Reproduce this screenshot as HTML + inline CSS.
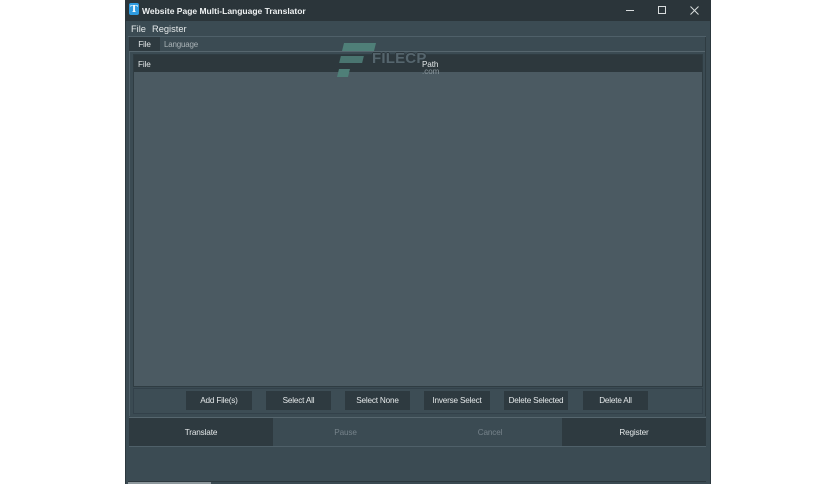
<!DOCTYPE html>
<html>
<head>
<meta charset="utf-8">
<style>
html,body{margin:0;padding:0;background:#fff}
body{width:836px;height:484px;position:relative;overflow:hidden;font-family:"Liberation Sans",sans-serif}
div{position:absolute;box-sizing:border-box}
.t{white-space:nowrap;color:#e4e8e9;font-size:8.2px;letter-spacing:-.15px;line-height:12px;text-align:center}
.b{top:391px;height:19px;background:#2e3a40;color:#e4e8e9;font-size:8.2px;letter-spacing:-.2px;line-height:19px;text-align:center;white-space:nowrap}
.a{top:418px;height:28px;font-size:8.2px;letter-spacing:-.15px;line-height:29px;text-align:center;color:#e4e8e9}
</style>
</head>
<body>
<div style="left:125px;top:0;width:586px;height:484px;background:#3b4b53"></div>
<div style="left:125px;top:0;width:586px;height:21px;background:#2b353a"></div>
<div style="left:125px;top:21px;width:1px;height:463px;background:#2c383e"></div>
<div style="left:710px;top:21px;width:1px;height:463px;background:#2c383e"></div>
<div style="left:129px;top:3px;width:10px;height:12px;background:#2f9be0;border-radius:2px"></div>
<div style="left:129px;top:3px;width:10px;height:12px;color:#fff;font:bold 11px/12px 'Liberation Serif',serif;text-align:center">T</div>
<div class="t" style="left:142px;top:5px;font-size:8.5px;letter-spacing:0;font-weight:bold;color:#eef1f2">Website Page Multi-Language Translator</div>
<div style="left:626px;top:10px;width:8px;height:1px;background:#d8dcdd"></div>
<div style="left:658px;top:6px;width:8px;height:8px;border:1px solid #d8dcdd"></div>
<svg style="position:absolute;left:690px;top:6px" width="9" height="9" viewBox="0 0 9 9"><path d="M0.5 0.5L8.5 8.5M8.5 0.5L0.5 8.5" stroke="#d8dcdd" stroke-width="1" fill="none"/></svg>
<div class="t" style="left:131px;top:23px;font-size:9.3px;letter-spacing:0">File</div>
<div class="t" style="left:152px;top:23px;font-size:9.3px;letter-spacing:0">Register</div>
<div style="left:128px;top:36px;width:578px;height:1px;background:#4f6069"></div>
<div style="left:129px;top:37px;width:31px;height:14px;background:#2e3a40"></div>
<div class="t" style="left:129px;top:39px;width:31px">File</div>
<div class="t" style="left:164px;top:39px;font-size:8px;letter-spacing:-.2px;color:#a9b2b6">Language</div>
<div style="left:129px;top:51px;width:577px;height:1px;background:#56666e"></div>
<div style="left:129px;top:52px;width:1px;height:364px;background:#4f6069"></div>
<div style="left:705px;top:37px;width:1px;height:379px;background:#2f3c42"></div>
<div style="left:133px;top:54px;width:570px;height:333px;background:#4b5a62;border:1px solid #2f3c42"></div>
<div style="left:134px;top:55px;width:568px;height:17px;background:#2d383d"></div>
<div class="t" style="left:138px;top:59px">File</div>
<div style="left:343px;top:43px;width:32px;height:8px;background:#4f7f78;transform:skewX(-14deg)"></div>
<div style="left:340px;top:56px;width:23px;height:7px;background:#4a7570;transform:skewX(-14deg)"></div>
<div style="left:338px;top:69px;width:11px;height:8px;background:#4f7f78;transform:skewX(-14deg)"></div>
<div class="t" style="left:372px;top:50px;font-size:15px;letter-spacing:.2px;line-height:18px;font-weight:bold;color:#55656d;text-shadow:-1px 0 0 #2c373d,1px 0 0 #2c373d,0 -1px 0 #2c373d,0 1px 0 #2c373d">FILECP</div>
<div class="t" style="left:422px;top:59px">Path</div>
<div class="t" style="left:422px;top:66px;font-size:8px;letter-spacing:0;color:#8b989e">.com</div>
<div style="left:133px;top:388px;width:570px;height:26px;border:1px solid #33414a;background:#3d4d55"></div>
<div class="b" style="left:186px;width:66px">Add File(s)</div>
<div class="b" style="left:266px;width:65px">Select All</div>
<div class="b" style="left:345px;width:65px">Select None</div>
<div class="b" style="left:424px;width:66px">Inverse Select</div>
<div class="b" style="left:504px;width:64px">Delete Selected</div>
<div class="b" style="left:583px;width:65px">Delete All</div>
<div style="left:129px;top:417px;width:577px;height:1px;background:#56666e"></div>
<div class="a" style="left:129px;width:144px;background:#2e3a40">Translate</div>
<div class="a" style="left:273px;width:145px;background:#3b4b53;color:#75828a">Pause</div>
<div class="a" style="left:418px;width:144px;background:#3b4b53;color:#75828a">Cancel</div>
<div class="a" style="left:562px;width:144px;background:#2e3a40">Register</div>
<div style="left:129px;top:446px;width:577px;height:1px;background:#4f6069"></div>
<div style="left:128px;top:481px;width:578px;height:1px;background:#2c383e"></div>
<div style="left:128px;top:482px;width:83px;height:2px;background:#8d979c"></div>
</body>
</html>
